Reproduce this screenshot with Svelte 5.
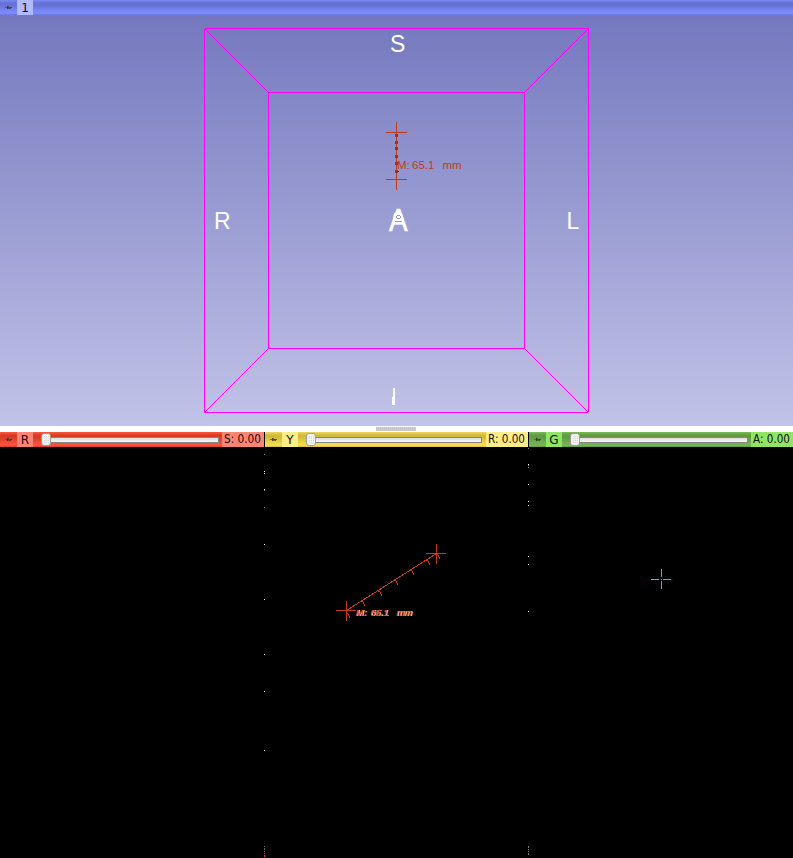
<script>
  const slices = [
    { id: 'red', letter: 'R', value: 'S: 0.00' },
    { id: 'yellow', letter: 'Y', value: 'R: 0.00' },
    { id: 'green', letter: 'G', value: 'A: 0.00' }
  ];
  const specks = {
    yellow: [[7, '#777'], [24, '#fff'], [26, '#ddd'], [42, '#fff'], [43, '#777'], [60, '#777'], [97, '#fff'], [152, '#fff'], [207, '#fff'], [244, '#fff'], [303, '#fff'], [399, '#667'], [401, '#667'], [402, '#667'], [404, '#667'], [406, '#667'], [408, '#f33'], [409, '#f33']],
    green: [[1, '#777'], [17, '#fff'], [18, '#777'], [20, '#888'], [37, '#fff'], [54, '#fff'], [58, '#fff'], [109, '#fff'], [117, '#fff'], [164, '#fff'], [399, '#777'], [400, '#777'], [402, '#777'], [404, '#777'], [406, '#777'], [407, '#777']]
  };
  const beads = [135, 142, 148, 156, 163, 171];
  const ticks = [[361, 601], [378, 591], [394, 580], [410, 570], [426, 560], [436, 554], [346, 613]];
</script>

{#snippet pin()}
  <svg class="pin" width="17" height="15" viewBox="0 0 17 15" shape-rendering="crispEdges">
    <path d="M5 7h2v1H5z" fill="#444" opacity=".65" />
    <path d="M7 6h1v3H7z" fill="#222" opacity=".75" />
    <path d="M8 7h2v1H8z" fill="#484840" />
    <path d="M8 8h2v1H8zM8 6h1v1H8z" fill="#333" opacity=".55" />
    <path d="M10 7h1v2h-1zM11 7h1v1h-1z" fill="#222" opacity=".65" />
  </svg>
{/snippet}

<main>
  <section class="view3d">
    <header class="bar blue">{@render pin()}<span class="letter">1</span></header>
    <svg class="scene" width="793" height="411" viewBox="0 15 793 411">
      <g fill="none" stroke="#f0f" shape-rendering="crispEdges">
        <rect x="204.5" y="28.5" width="384" height="384" rx="1.5" />
        <rect x="268.5" y="92.5" width="256" height="256" />
        <path d="M205 29l63 63M588 29l-63 63M205 412l63-63M588 412l-63-63" />
      </g>
      <g class="axis">
        <text x="390" y="52">S</text>
        <text x="214" y="228.5">R</text>
        <text x="566.5" y="228.5">L</text>
        <path d="M393 388h2v17h-3v-8h1z" shape-rendering="crispEdges" />
        <text class="front" x="389" y="230.5" textLength="18.6" lengthAdjust="spacingAndGlyphs">A</text>
        <path d="M394 213h8l3 11h-13z" />
        <path d="M397 215h3v1h-3zM396 216h1v2h-1zM400 216h1v2h-1zM397 218h3v1h-3zM395 221h7v1h-7z" fill="#9498cf" shape-rendering="crispEdges" />
      </g>
      <path d="M386 132.5h21M386 179.5h21M396.5 122v68" stroke="#c23c18" shape-rendering="crispEdges" />
      {#each beads as y}
        <rect x="395" y={y - 1} width="3" height="3" fill="#a92c16" shape-rendering="crispEdges" />
      {/each}
      <text class="measure" y="169"><tspan x="397">M:</tspan><tspan x="412" textLength="22.5">65.1</tspan><tspan x="442.5">mm</tspan></text>
      <path d="M398 171h1v1h-1z" fill="#111" />
    </svg>
  </section>
  <div class="splitter"><i></i></div>
  <section class="slices">
    {#each slices as s}
      <article class={s.id}>
        <header class="bar">
          {@render pin()}<span class="letter">{s.letter}</span>
          <div class="slider"><div class="groove"></div>
            <svg class="knob" width="11" height="14" viewBox="0 0 11 14">
              <rect x=".5" y=".5" width="9" height="12" rx="2.5" fill="#f2f2f2" stroke="#8c8c80" stroke-opacity=".75" />
              <path d="M3 3.5h5M3 5.5h5M3 7.5h5M3 9.5h5" stroke="#d2d2d2" stroke-dasharray="1 1" />
            </svg>
          </div>
          <span class="value"><svg width="42" height="15"><text x="2" y="11" textLength="37" lengthAdjust="spacingAndGlyphs">{s.value}</text></svg></span>
        </header>
        <div class="viewport">
          {#if specks[s.id]}
            <svg class="specks" width="1" height="411" shape-rendering="crispEdges">
              {#each specks[s.id] as [y, color]}<rect x="0" {y} width="1" height="1" fill={color} />{/each}
            </svg>
          {/if}
          {#if s.id === 'yellow'}
            <svg class="overlay" width="263" height="411" viewBox="265 447 263 411">
              <g stroke="#c5391a" fill="none" shape-rendering="crispEdges">
                <path d="M336 610.5h20M346.5 601v20M426 553.5h20M436.5 544v20M346.5 610.5L436.5 553.5" />
                {#each ticks as [x, y]}<path d="M{x} {y}l2 1 2 4" />{/each}
              </g>
              <text class="ruler shade" y="616"><tspan x="356.5" textLength="11">M:</tspan><tspan x="371" textLength="18">65.1</tspan><tspan x="397" textLength="16">mm</tspan></text>
              <text class="ruler" y="615.5"><tspan x="355.8" textLength="11">M:</tspan><tspan x="370.3" textLength="18">65.1</tspan><tspan x="396.3" textLength="16">mm</tspan></text>
            </svg>
          {:else if s.id === 'green'}
            <svg class="overlay" width="264" height="411" viewBox="529 447 264 411">
              <path d="M651 579.5h8M661 579.5h1M663 579.5h8M661.5 569v8M661.5 581v8" stroke="#0f0" shape-rendering="crispEdges" />
            </svg>
          {/if}
        </div>
      </article>
    {/each}
  </section>
</main>

<style>
  :global(body) { margin: 0; background: #000; }
  main { width: 793px; height: 858px; display: flex; flex-direction: column; overflow: hidden; font-family: "DejaVu Sans", sans-serif; }
  svg { display: block; flex: none; }
  .view3d { height: 426px; background: linear-gradient(#7175bc, #c2c3e8); }
  .bar { height: 15px; display: flex; align-items: stretch; color: #111; background: linear-gradient(var(--edge) 0, var(--dark) 22%, var(--dark) 35%, var(--light) 80%, var(--light) 90%, var(--dark) 100%); }
  .blue { --edge: #7b88f4; --dark: #6572d3; --light: #7b8bff; --label: #b1b9ff; }
  .letter { width: 16px; height: 15px; flex: none; background: var(--label); font-size: 12px; line-height: 16px; text-align: center; }
  .splitter { height: 6px; flex: none; background: #fff; display: flex; justify-content: center; align-items: flex-start; }
  .splitter i { width: 40px; height: 4px; margin-top: 1px; margin-right: 1px; background: repeating-linear-gradient(90deg, #c5c5c5 0 1px, #cecece 1px 2px); }
  .slices { height: 426px; display: grid; grid-template-columns: 264px 263px 264px; column-gap: 1px; background: #000; }
  .red { --edge: #ff5940; --dark: #d53c25; --light: #ff5139; --label: #ff8474; }
  .yellow { --edge: #ecd760; --dark: #d3bb3a; --light: #f4dc4d; --label: #ffed86; }
  .green { --edge: #7abb59; --dark: #5f9b43; --light: #74b552; --label: #90e565; }
  .slider { flex: 1; display: flex; align-items: center; padding: 0 3px 0 8px; position: relative; }
  .yellow .slider { padding-right: 4px; }
  .groove { flex: 1; height: 6px; box-sizing: border-box; border: 1px solid #858585; background: linear-gradient(#dcdcdc, #fafafa); }
  .knob { position: absolute; left: 8px; top: 1px; }
  .value { width: 42px; flex: none; background: var(--label); }
  .value text { font-size: 11.5px; fill: #111; }
  .viewport { position: relative; height: 411px; background: #000; }
  .specks { position: absolute; left: -1px; top: 0; }
  .axis { fill: #fff; font: 23px "Liberation Sans", sans-serif; }
  .front { font-size: 31px; stroke: #fff; stroke-width: .6; }
  .measure { font: 11.5px "Liberation Sans", sans-serif; fill: #c23c18; }
  .ruler { font: italic bold 9.5px "Liberation Sans", sans-serif; fill: #d64a28; }
  .shade { fill: #eee; }
</style>
